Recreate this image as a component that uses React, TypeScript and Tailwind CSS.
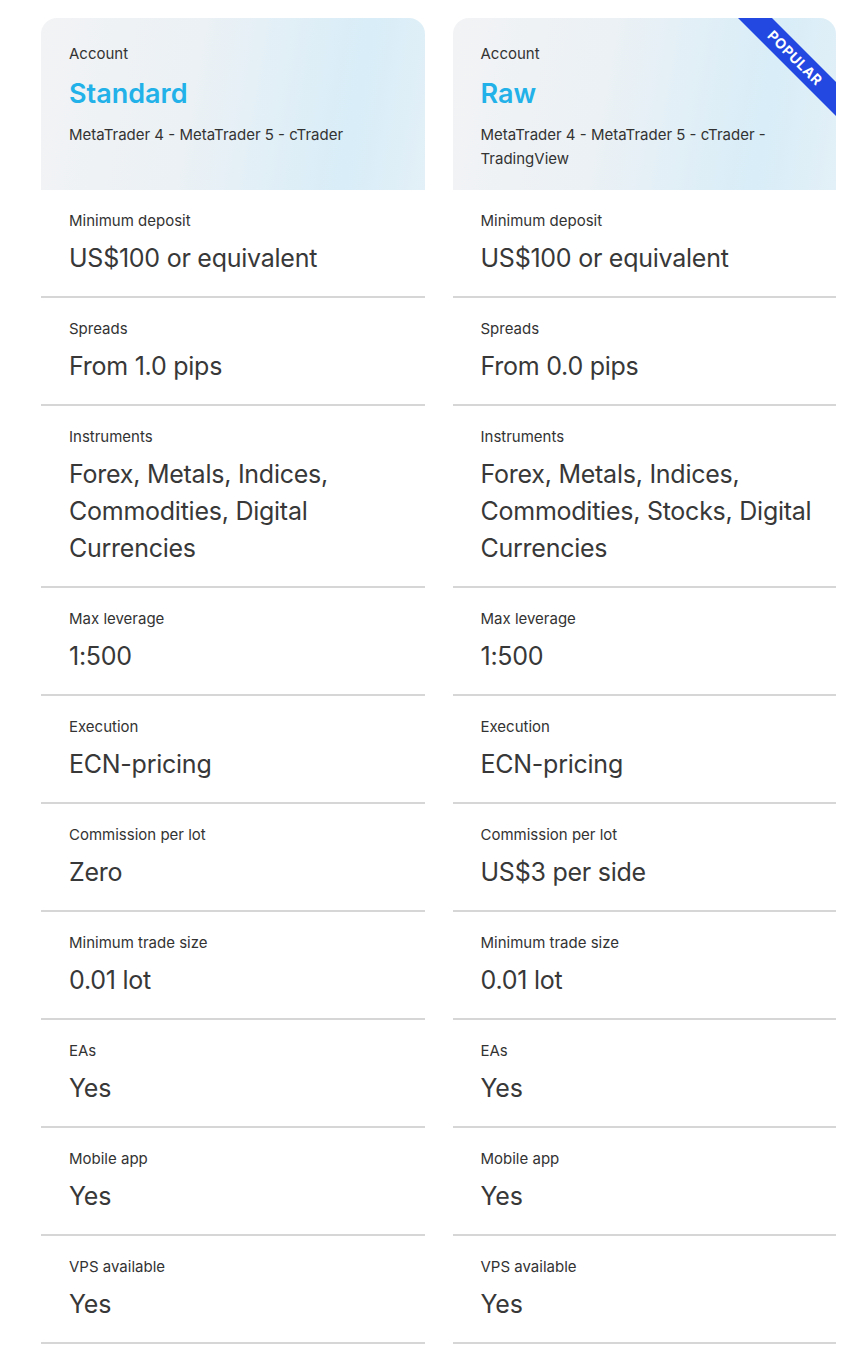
import React from "react";

type Row = { label: string; value: string };

const standardRows: Row[] = [
  { label: "Minimum deposit", value: "US$100 or equivalent" },
  { label: "Spreads", value: "From 1.0 pips" },
  { label: "Instruments", value: "Forex, Metals, Indices, Commodities, Digital Currencies" },
  { label: "Max leverage", value: "1:500" },
  { label: "Execution", value: "ECN-pricing" },
  { label: "Commission per lot", value: "Zero" },
  { label: "Minimum trade size", value: "0.01 lot" },
  { label: "EAs", value: "Yes" },
  { label: "Mobile app", value: "Yes" },
  { label: "VPS available", value: "Yes" },
];

const rawRows: Row[] = [
  { label: "Minimum deposit", value: "US$100 or equivalent" },
  { label: "Spreads", value: "From 0.0 pips" },
  { label: "Instruments", value: "Forex, Metals, Indices, Commodities, Stocks, Digital Currencies" },
  { label: "Max leverage", value: "1:500" },
  { label: "Execution", value: "ECN-pricing" },
  { label: "Commission per lot", value: "US$3 per side" },
  { label: "Minimum trade size", value: "0.01 lot" },
  { label: "EAs", value: "Yes" },
  { label: "Mobile app", value: "Yes" },
  { label: "VPS available", value: "Yes" },
];

function Card({
  name,
  platforms,
  rows,
  popular,
}: {
  name: string;
  platforms: string;
  rows: Row[];
  popular?: boolean;
}) {
  return (
    <div className="flex flex-col">
      <div className="relative overflow-hidden rounded-t-[16px] bg-[linear-gradient(100deg,#f2f3f5_0%,#ebf1f5_40%,#d8edf8_80%,#e3f0f7_100%)] pl-[28px] pr-[24px] pt-[26px] pb-[19px] h-[172px]">
        {popular && (
          <div className="absolute right-[-39px] top-[28px] w-[160px] h-[24px] rotate-45 bg-[#2348e2] flex items-center justify-center">
            <span className="text-white text-[14px] font-bold tracking-[0.04em] leading-none">
              POPULAR
            </span>
          </div>
        )}
        <div className="text-[15px] leading-[20px] text-[#333]">Account</div>
        <div className="mt-[14px] text-[27px] leading-[32px] font-semibold text-[#22b1e8]">{name}</div>
        <div className="mt-[13px] text-[15px] leading-[24px] text-[#333] pr-[30px]">{platforms}</div>
      </div>
      {rows.map((r) => (
        <div
          key={r.label}
          className="border-b-2 border-[#d6d6d6] pl-[28px] pr-[10px] pt-[21px] pb-[19px]"
        >
          <div className="text-[15px] leading-[20px] text-[#333]">{r.label}</div>
          <div className="mt-[9px] text-[25px] leading-[37px] text-[#383838] tracking-[-0.01em]">
            {r.value}
          </div>
        </div>
      ))}
    </div>
  );
}

export default function App() {
  return (
    <div
      className="bg-white w-[860px] min-h-[1347px] pt-[18px] pl-[41px] pr-[24px]"
      style={{ fontFamily: "Inter, 'Liberation Sans', sans-serif" }}
    >
      <div className="grid grid-cols-2 gap-x-[28px]">
        <Card
          name="Standard"
          platforms="MetaTrader 4 - MetaTrader 5 - cTrader"
          rows={standardRows}
        />
        <Card
          name="Raw"
          platforms="MetaTrader 4 - MetaTrader 5 - cTrader - TradingView"
          rows={rawRows}
          popular
        />
      </div>
    </div>
  );
}
